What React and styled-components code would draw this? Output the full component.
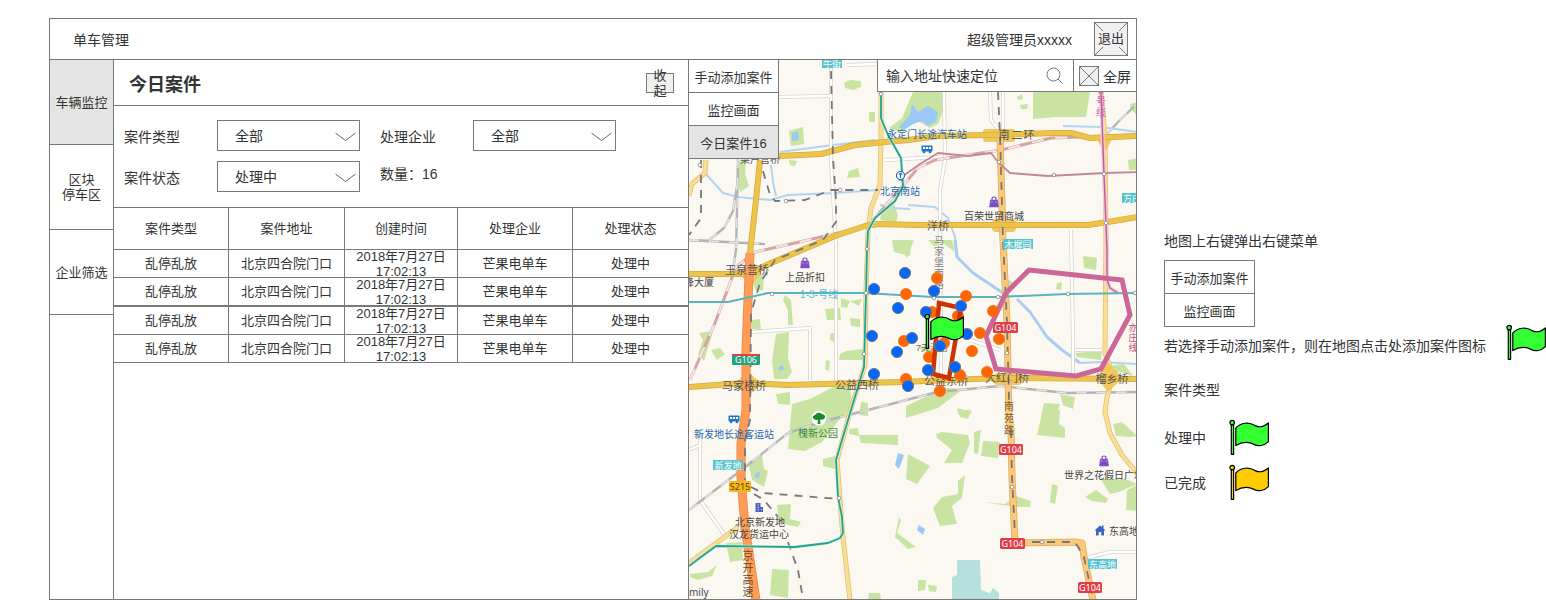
import React from "react";
import styled, { createGlobalStyle } from "styled-components";

const LINE = "#797979";

const GlobalStyle = createGlobalStyle`
  * { box-sizing: border-box; }
  body {
    margin: 0;
    background: #fff;
    color: #333;
    font-family: "Liberation Sans", "Noto Sans CJK SC", sans-serif;
    font-size: 14px;
  }
  button, input, select { font: inherit; color: inherit; margin: 0; }
`;

const Page = styled.div`
  display: flex;
  min-height: 100vh;
  padding: 18px 0 0 49px;
`;

const Frame = styled.div`
  flex: 1;
  min-width: 0;
  display: flex;
  flex-direction: column;
  border: 1px solid ${LINE};
`;

const Header = styled.header`
  display: flex;
  align-items: center;
  height: 41px;
  padding: 0 8px 0 23px;
  border-bottom: 1px solid ${LINE};
`;

const Brand = styled.div`
  flex: 1;
`;

const User = styled.div`
  margin-right: 22px;
`;

const LogoutButton = styled.button`
  position: relative;
  width: 34px;
  height: 34px;
  padding: 0;
  border: 1px solid ${LINE};
  background: #f0f0f0;
  font-size: 13px;
  svg {
    position: absolute;
    inset: 0;
    width: 100%;
    height: 100%;
  }
  span {
    position: relative;
    display: block;
    background: #f0f0f0;
    margin: 0 2px;
    line-height: 16px;
  }
`;

const Body = styled.div`
  flex: 1;
  display: flex;
`;

const Sidebar = styled.nav`
  width: 64px;
  border-right: 1px solid ${LINE};
`;

const SideItem = styled.button`
  display: block;
  width: 100%;
  height: 85px;
  padding: 0;
  border: 0;
  border-bottom: 1px solid ${LINE};
  background: ${(p) => (p.$active ? "#e4e4e4" : "#fff")};
  font-size: 13px;
  line-height: 15px;
  white-space: pre-line;
`;

const Panel = styled.section`
  width: 575px;
  border-right: 1px solid ${LINE};
`;

const PanelHead = styled.div`
  display: flex;
  align-items: center;
  justify-content: space-between;
  height: 46px;
  padding: 0 14px 0 15px;
  border-bottom: 1px solid ${LINE};
  h1 {
    margin: 0;
    font-size: 18px;
    font-weight: bold;
  }
`;

const FoldButton = styled.button`
  display: flex;
  align-items: center;
  width: 28px;
  height: 20px;
  padding: 0 6px;
  border: 1px solid ${LINE};
  background: #f0f0f0;
  font-size: 13px;
  line-height: 15px;
`;

const Filters = styled.div`
  display: grid;
  grid-template-columns: 93px 143px 113px 143px;
  grid-auto-rows: 31px;
  row-gap: 10px;
  align-items: center;
  padding: 14px 10px 15px;
  label:nth-of-type(even) {
    padding-left: 20px;
  }
`;

const SelectBox = styled.div`
  position: relative;
  height: 31px;
  svg {
    position: absolute;
    right: 4px;
    top: 12px;
    pointer-events: none;
  }
`;

const Select = styled.select`
  appearance: none;
  width: 100%;
  height: 100%;
  padding: 0 30px 0 17px;
  border: 1px solid ${LINE};
  border-radius: 0;
  background: #fff;
`;

const Count = styled.div`
  align-self: start;
  padding-left: 20px;
  line-height: 26px;
`;

const Table = styled.table`
  width: 100%;
  table-layout: fixed;
  border-collapse: separate;
  border-spacing: 0;
  border-top: 1px solid ${LINE};
  font-size: 13px;
  line-height: 15px;
`;

const Th = styled.th`
  height: 42px;
  padding: 0;
  font-weight: normal;
  border-bottom: 1px solid ${LINE};
  border-right: 1px solid ${LINE};
  &:last-child { border-right: 0; }
`;

const Td = styled.td`
  padding: 0;
  border-bottom: ${(p) => (p.$heavy ? 2 : 1)}px solid ${LINE};
  border-right: 1px solid ${LINE};
  &:last-child { border-right: 0; }
`;

const CellText = styled.div`
  display: flex;
  align-items: center;
  justify-content: center;
  height: 27px;
  text-align: center;
  white-space: pre-line;
`;

const MapArea = styled.section`
  position: relative;
  flex: 1;
  min-width: 0;
  overflow: hidden;
  background: #fbf8f2;
`;

const MapSvg = styled.svg`
  position: absolute;
  inset: 0;
  width: 100%;
  height: 100%;
`;

const MapTools = styled.div`
  position: absolute;
  top: 0;
  left: 0;
  width: 90px;
  border-right: 1px solid ${LINE};
`;

const MenuBox = styled.div`
  width: 91px;
  margin-top: 9px;
  border: 1px solid ${LINE};
  border-bottom: 0;
`;

const MenuItem = styled.button`
  display: block;
  width: 100%;
  height: 33px;
  padding: 0;
  border: 0;
  border-bottom: 1px solid ${LINE};
  background: ${(p) => (p.$active ? "#e4e4e4" : "#fff")};
  font-size: 13px;
  white-space: nowrap;
`;

const SearchBar = styled.div`
  position: absolute;
  top: 0;
  right: 0;
  display: flex;
  height: 32px;
  border-left: 1px solid ${LINE};
  border-bottom: 1px solid ${LINE};
  background: #fff;
`;

const SearchField = styled.label`
  display: flex;
  align-items: center;
  width: 195px;
  padding: 0 10px 0 8px;
  input {
    flex: 1;
    min-width: 0;
    padding: 0;
    border: 0;
    outline: 0;
    background: none;
  }
  input::placeholder { color: #333; opacity: 1; }
`;

const FullButton = styled.button`
  display: flex;
  align-items: center;
  justify-content: space-between;
  width: 63px;
  padding: 0 5px;
  border: 0;
  border-left: 1px solid ${LINE};
  background: #fff;
`;

const Notes = styled.aside`
  width: 409px;
  padding: 213px 0 0 27px;
  p, h2 {
    margin: 0;
    font-size: 14px;
    font-weight: normal;
    line-height: 20px;
  }
  h2 { margin-top: 12px; }
`;

const HintRow = styled.div`
  display: flex;
  align-items: flex-start;
  justify-content: space-between;
  margin-top: -3px;
  line-height: 44px;
`;

const Legend = styled.div`
  display: grid;
  grid-template-columns: 65px 40px;
  row-gap: 9px;
  margin-top: 19px;
  align-items: center;
`;

const FlagSvg = styled.svg`
  display: block;
  flex: none;
`;

function FlagShape({ color }) {
  return (
    <g fill={color} stroke="#000" strokeWidth="1.2" strokeLinejoin="round">
      <path d="M2.3 5.5H4.6V35.3H2.3Z" />
      <circle cx="3.2" cy="3.6" r="2.3" />
      <path d="M6.8 9C12 3.4 20 2.8 26 6.6C31 9.2 35.5 7.2 39.4 4V22.6C35 27 29 27.6 25 25.4C18 21.8 12 23.4 6.8 26.6Z" />
    </g>
  );
}

const Flag = ({ color }) => (
  <FlagSvg width="40" height="36" viewBox="0 0 40 36" aria-hidden="true">
    <FlagShape color={color} />
  </FlagSvg>
);

function Picker({ id, options }) {
  return (
    <SelectBox>
      <Select id={id}>
        {options.map((o) => <option key={o}>{o}</option>)}
      </Select>
      <svg width="21" height="10" viewBox="0 0 21 10" fill="none" stroke="#666" aria-hidden="true">
        <path d="M0.5 1L10.5 8.5L20.5 1" />
      </svg>
    </SelectBox>
  );
}

const parks = [
  "844,83 850,80 861,81 861,87 853,90 845,88",
  "789,131 803,127 804,144 791,146", "869,112 875,112 875,122 869,122",
  "849,171 858,168 860,177 847,178", "738,162 746,160 745,174 749,186 740,192 738,180",
  "1033,92 1090,92 1086,117 1056,117 1033,119",
  "889,128 902,118 913,92 944,92 946,104 938,124 930,128 912,118 900,132",
  "880,220 883,205 894,203 898,216 896,222", "1128,160 1137,158 1137,170 1129,170",
  "1130,104 1137,102 1137,116 1130,108", "789,160 797,161 795,166 790,165",
  "892,240 912,240 910,256 894,252", "900,248 908,241 914,240 907,258",
  "928,240 952,240 955,252 944,244 934,246",
  "755,273 764,276 763,290 756,291 753,284", "752,320 760,319 761,330 752,329",
  "785,295 791,300 793,325 788,325 788,310 783,300",
  "699,333 713,331 704,361 698,354 703,340", "711,350 720,348 725,354 717,360",
  "776,334 789,332 788,358 792,372 787,379 774,379 772,360",
  "825,309 840,308 841,320 827,320", "841,298 850,301 847,308 841,307", "850,301 862,299 859,306",
  "850,318 860,319 860,327 851,326", "830,334 836,332 834,342 830,340",
  "826,360 830,361 829,371 825,369", "846,351 863,349 864,360 839,360 840,354",
  "792,404 810,399 835,386 850,384 852,407 840,419 822,442 805,451 788,449",
  "776,394 790,392 790,405 778,404", "861,402 868,403 868,416 859,415",
  "859,435 861,443 898,445 898,435", "849,429 858,428 859,436 849,434",
  "823,459 835,456 835,469 823,466",
  "748,462 762,455 764,469 768,471 764,487 752,480",
  "777,505 791,504 790,519 801,522 798,527 779,523",
  "772,569 789,570 788,598 770,595", "726,543 742,542 743,560 730,562",
  "690,574 708,572 717,565 712,576 698,580 690,577",
  "899,517 901,520 897,533 916,547 908,549 895,537",
  "869,593 880,593 881,600 868,600",
  "936,434 942,432 968,435 970,443 962,463 944,463 952,450 937,438",
  "974,432 981,430 978,454 974,453", "983,441 1000,442 998,458 981,456",
  "908,454 930,466 917,484 906,479", "958,481 965,475 963,490 962,498 952,506 957,524 940,526 933,508 942,497 958,494",
  "984,502 1005,504 1016,496 1031,501 1030,507 1018,507 1002,505", "1043,410 1060,410 1059,424 1065,428 1065,438 1037,435",
  "959,410 971,410 968,419 960,417", "1113,424 1122,422 1137,436 1130,437 1116,436",
  "1052,484 1058,486 1055,504 1050,502", "1100,478 1128,480 1137,484 1119,492 1110,494",
  "1085,497 1096,490 1108,499 1106,503 1092,501", "1127,490 1137,485 1137,511 1126,510",
  "918,580 926,580 925,590 918,591", "928,585 937,586 936,592 929,591",
  "1083,256 1097,258 1096,270 1084,268", "1057,283 1062,282 1061,290 1056,289",
  "1075,353 1102,351 1101,360 1077,357", "1105,366 1124,364 1133,376 1120,372 1106,374",
  "944,388 963,389 938,408 906,418 906,406", "957,408 972,412 967,418 958,414",
  "1044,403 1060,404 1055,420 1041,417", "1060,394 1075,397 1073,409 1063,405",
  "1009,280 1016,284 1008,291 1004,285", "920,346 931,348 930,352 921,351",
  "1017,97 1022,94 1023,99 1018,100", "1020,105 1028,104 1027,109 1021,109",
];

const water = [
  "792,133 798,131 799,140 792,141", "899,127 910,115 912,104 918,112 928,106 938,112 936,122 928,126 922,121 913,124 904,130",
  "898,453 904,455 899,469 895,465", "919,525 925,529 923,535 917,530",
  "778,368 782,365 785,369 779,371", "755,474 760,471 759,478 755,478",
];

const streams = [
  "705,173 723,193 738,197 770,200 788,195 835,193 878,190",
  "771,165 773,182 776,196", "780,152 833,145 875,140",
  "908,205 935,207 948,218 955,237 957,257 973,273 1003,293",
  "1080,363 1100,362 1137,364", "880,205 893,208 910,209", "1063,126 1100,127 1137,132",
];

const lanes = [
  "831,60 831,160 836,245 836,380", "847,65 878,64", "779,97 831,96", "990,92 991,120 999,130",
  "944,92 945,160 940,190 941,380", "1071,230 1073,340 1073,375", "1075,350 1102,350",
  "751,332 810,328 810,380", "700,435 700,500 724,534", "689,450 700,445",
  "885,160 940,157", "1086,558 1110,552 1137,552", "970,340 1000,350",
  "1003,92 1003,130",
];

const railGrey = [
  "738,158 737,211 736,250 733,270",
  "689,240 708,241 724,228 733,211 738,180",
  "689,240 765,244",
  "689,510 748,465 788,433 821,422 868,410 918,397 937,392 1000,386 1067,393 1137,392",
  "1106,135 1120,120 1137,104",
];

const railPink = [
  "690,380 715,323 736,267 755,252 795,243 868,226 918,168 935,160 1001,150 1051,138 1137,135",
];

const dashes = [
  "831,71 833,158 836,200 836,222 823,240 775,260 760,283 751,313 750,420 745,440 745,480",
  "701,160 701,218 689,235", "763,171 770,195 775,201 805,200 831,190 878,190",
  "751,487 763,493 839,499", "754,494 764,500 778,517", "788,542 798,570 803,599",
  "998,92 1000,135 1003,240 1007,323 1009,400", "1011,430 1012,477 1015,535",
  "1032,542 1075,542 1084,557 1093,599",
];

const yellowRoads = [
  "779,156 821,154 855,145 885,142 908,140 938,136 988,135 1055,133 1071,133 1090,138 1137,136",
  "760,160 756,200 750,253",
  "689,274 748,274 771,263 835,236 865,226 878,224 918,225 1088,225 1108,222 1137,217",
  "689,387 745,383 788,385 901,382 1000,378 1137,379",
];

const paleRoads = [
  "881,91 881,138 880,185 871,208 868,232 866,293 865,365 851,408 837,460 840,500 843,537 850,600",
  "1101,92 1105,137 1106,240 1105,353 1113,376 1107,397 1105,412 1110,433 1122,455 1137,473",
  "689,563 738,527",
  "689,196 692,184 705,173 706,160",
];

const orangeDots = [
  [906, 294], [904, 341], [906, 379], [937, 278], [966, 296], [993, 311], [932, 312], [958, 316],
  [980, 333], [999, 339], [944, 343], [972, 351], [929, 357], [960, 375], [987, 372], [940, 391],
];
const blueDots = [
  [905, 273], [874, 289], [898, 308], [872, 336], [912, 338], [897, 352], [874, 374], [908, 386],
  [934, 291], [961, 306], [926, 312], [967, 334], [940, 346], [928, 370], [955, 367],
];
const stations = [
  [772, 294], [866, 293], [934, 298], [998, 297], [1068, 294], [1135, 293], [867, 249], [864, 354],
  [839, 498], [999, 162], [1054, 175], [1104, 174], [1106, 223], [1007, 353], [1042, 542],
  [1012, 487], [700, 165], [786, 201], [840, 190], [881, 94],
];

// [x, y, text, size, colour]
const labels = [
  [760, 163, "菜户营桥", 10, "#555"],
  [927, 138, "永定门长途汽车站", 10, "#2467ad"],
  [900, 195, "北京南站", 10, "#2467ad"],
  [994, 220, "百荣世贸商城", 10, "#444"],
  [938, 230, "洋桥", 11, "#555"],
  [747, 274, "玉泉营桥", 11, "#555"],
  [699, 286, "锋大厦", 10, "#444"],
  [805, 281, "上品折扣", 10, "#444"],
  [744, 390, "马家楼桥", 11, "#555"],
  [857, 389, "公益西桥", 11, "#555"],
  [946, 385, "公益东桥", 11, "#555"],
  [1007, 382, "大红门桥", 11, "#555"],
  [1112, 383, "榴乡桥", 11, "#555"],
  [932, 351, "7天酒店", 9, "#666"],
  [734, 438, "新发地长途客运站", 10, "#2467ad"],
  [818, 437, "槐新公园", 10, "#3c8a3f"],
  [760, 526, "北京新发地", 10, "#444"],
  [759, 538, "汉龙货运中心", 10, "#444"],
  [1104, 479, "世界之花假日广场", 10, "#444"],
  [1129, 535, "东高地区", 10, "#444"],
  [819, 298, "1-3-号线", 10, "#5cb8ce"],
  [1004, 139, "南", 11, "#555"],
  [1017, 139, "二", 11, "#555"],
  [1029, 139, "环", 11, "#555"],
];

// [x, first baseline, step, text, size, colour]
const columns = [
  [939, 244, 11, "马家堡西路", 10, "#888"],
  [1009, 410, 12, "南苑路", 10, "#775f38"],
  [1101, 94, 11, "5号线", 10, "#cc62b0"],
  [1133, 331, 10, "亦庄线", 9, "#c04878"],
  [748, 560, 12, "京开高速", 11, "#6b4a2a"],
];

// [x, y, width, text, background]
const tags = [
  [822, 58, 20, "牛街", "#56c4cf"],
  [1003, 239, 30, "木樨园", "#56c4cf"],
  [1122, 193, 20, "方庄", "#56c4cf"],
  [713, 460, 30, "新发地", "#56c4cf"],
  [1088, 559, 29, "东高地", "#56c4cf"],
];
const shields = [
  [993, 322, 25, "G104", "#dd3e48", "#fff"],
  [999, 444, 24, "G104", "#dd3e48", "#fff"],
  [1000, 538, 25, "G104", "#dd3e48", "#fff"],
  [1078, 582, 24, "G104", "#dd3e48", "#fff"],
  [732, 354, 28, "G106", "#23a47c", "#fff"],
  [729, 481, 22, "S215", "#f7b71b", "#5c4310"],
];

const Lines = ({ items, color, width, ...rest }) => (
  <g fill="none" stroke={color} strokeWidth={width} strokeLinejoin="round" {...rest}>
    {items.map((p) => <polyline key={p} points={p} />)}
  </g>
);

const Bag = ({ x, y }) => (
  <g transform={`translate(${x} ${y})`}>
    <path d="M-3.6 -2H3.6L4.5 5H-4.5Z" fill="#7a4fc4" stroke="#7a4fc4" strokeWidth="0.5" strokeLinejoin="round" />
    <path d="M-2 -2V-3Q-2 -5 0 -5Q2 -5 2 -3V-2" fill="none" stroke="#7a4fc4" strokeWidth="1.2" />
    <path d="M-2 -0.5V0.5M2 -0.5V0.5" stroke="#fff" strokeWidth="0.8" />
  </g>
);

const Bus = ({ x, y }) => (
  <g transform={`translate(${x} ${y})`} fill="#1f74c8">
    <rect x="-5.5" y="-3.5" width="11" height="6" rx="1" />
    <circle cx="-3" cy="3" r="1.3" />
    <circle cx="3" cy="3" r="1.3" />
    <path d="M-4 -2H-1.8V0H-4ZM-1 -2H1V0H-1ZM1.8 -2H4V0H1.8Z" fill="#fff" />
  </g>
);

function CityMap() {
  const g104 = ["1000,135 1003,240 1007,323 1009,420 1011,430 1012,477 1015,543 1075,542 1082,543 1084,557 1093,600"];
  const g106 = ["750,253 748,300 746,350 746,410 741,443 741,477 745,527 750,560 756,600"];
  const line4 = ["881,91 881,118 888,135 901,158 903,186 895,201 875,218 868,231 867,250 866,293 864,367 851,410 836,460 838,497 842,517 843,533 840,538 828,543 795,547 716,546 701,557 689,566"];
  const line13 = ["689,302 728,302 768,293 865,293 933,297 997,297 1067,294 1137,293"];
  const line14 = ["903,176 920,164 938,153 968,156 991,153 998,162 1010,173 1048,176 1105,173 1137,172"];
  const line5 = ["1101,92 1104,174 1107,250 1107,280 1110,288 1118,293"];
  return (
    <MapSvg viewBox="689 60 447 539" preserveAspectRatio="xMidYMid slice" role="img" aria-label="地图">
      <rect x="689" y="60" width="447" height="539" fill="#fbf8f2" />
      <g fill="#c9e4a2">{parks.map((p) => <polygon key={p} points={p} />)}</g>
      <g fill="#9cc8f5">{water.map((p) => <polygon key={p} points={p} />)}</g>
      <polygon points="957,560 980,560 981,590 990,593 993,588 999,593 999,600 952,600 952,577 957,575" fill="#b6e0dc" />
      <Lines items={streams} color="#b3d4ee" width="2" />
      <Lines items={["1017,299 1030,312 1047,337 1062,350 1080,363", "955,240 957,257 973,273 1003,293"]} color="#a9cdf3" width="3" />
      <Lines items={lanes} color="#d6d4d2" width="4" />
      <Lines items={lanes} color="#fff" width="2.4" />
      <Lines items={railGrey} color="#b4b4b8" width="2.4" />
      <Lines items={railGrey} color="#e6e6e6" width="1.4" strokeDasharray="10 10" />
      <Lines items={railPink} color="#d6a4a4" width="3" />
      <Lines items={railPink} color="#f5e6e4" width="2" strokeDasharray="12 12" />

      <Lines items={paleRoads} color="#ebbd62" width="5" />
      <Lines items={paleRoads} color="#f6dd98" width="3.6" />
      <g fill="#f4c65f">
        <polygon points="740,274 750,259 761,274 750,287" />
        <polygon points="735,384 747,371 762,384 747,397" />
        <rect x="983" y="129" width="32" height="13" rx="3" />
        <rect x="992" y="219" width="24" height="13" rx="4" />
        <rect x="994" y="373" width="28" height="12" rx="4" />
        <polygon points="1097,378 1107,362 1123,378 1108,392" />
        <polygon points="1096,137 1113,137 1107,149 1102,149" />
      </g>
      <Lines items={g104} color="#e7a65a" width="7" />
      <Lines items={g104} color="#fac97a" width="5.6" />
      <Lines items={yellowRoads} color="#d8a83c" width="6" />
      <Lines items={yellowRoads} color="#ecc44c" width="4.6" />
      <Lines items={g106} color="#e88a4c" width="9" />
      <Lines items={g106} color="#ff9c55" width="7.4" />
      <Lines items={dashes} color="#777" width="1.8" strokeDasharray="8 7" />

      <Lines items={line14} color="#c08796" width="1.8" />
      <Lines items={line5} color="#f3c9dc" width="4" />
      <Lines items={line5} color="#bb5f92" width="1.4" />
      <Lines items={line13} color="#5ab4be" width="2" />
      <Lines items={line4} color="#d9efe6" width="3" />
      <Lines items={line4} color="#22a48c" width="1.8" />
      <g fill="#fff" stroke="#8a8a8a" strokeWidth="0.8">
        {stations.map(([x, y]) => <circle key={`${x}-${y}`} cx={x} cy={y} r="1.8" />)}
      </g>

      {tags.map(([x, y, w, text, bg]) => (
        <g key={text}>
          <rect x={x} y={y} width={w} height="10" fill={bg} />
          <text x={x + w / 2} y={y + 9} fontSize="9" fill="#fff" textAnchor="middle">{text}</text>
        </g>
      ))}
      {shields.map(([x, y, w, text, bg, fg]) => (
        <g key={`${x}-${y}`}>
          <rect x={x} y={y} width={w} height="11" rx="1.5" fill={bg} />
          <text x={x + w / 2} y={y + 9} fontSize="9" fill={fg} textAnchor="middle" fontFamily="'Noto Sans', sans-serif">{text}</text>
        </g>
      ))}
      <rect x="732" y="354" width="28" height="2" fill="#dd3e48" />

      <g textAnchor="middle">
        {labels.map(([x, y, text, size, fill]) => (
          <text key={text} x={x} y={y} fontSize={size} fill={fill}>{text}</text>
        ))}
        {columns.map(([x, y, step, text, size, fill]) =>
          [...text].map((ch, i) => (
            <text key={text + i} x={x} y={y + i * step} fontSize={size} fill={fill}>{ch}</text>
          ))
        )}
      </g>
      <text x="689" y="596" fontSize="10" fill="#444" fontFamily="'Noto Sans', sans-serif">mily</text>

      <Bag x={994} y={202} />
      <Bag x={805} y={263} />
      <Bag x={1104} y={461} />
      <Bus x={927} y={149} />
      <Bus x={734} y={419} />
      <g fill="#fff" stroke="#2467ad" strokeWidth="1.2">
        <circle cx="900.5" cy="175.5" r="4" />
        <path d="M900.5 173V178M898.5 180H902.5M898.8 174.5Q900.5 172 902.2 174.5" />
      </g>
      <circle cx="819" cy="418" r="7.5" fill="#fff" />
      <path d="M814 419Q811 416 815 415Q818 411 822 414Q827 415 824 419Q822 420 820 419.5L820.5 424H817.5L818 419.5Q816 421 814 419Z" fill="#178a2a" />
      <path d="M756.5 503H760.5V507H763V512H755.5V503Z" fill="#4a63c0" />
      <path d="M757.5 505H759M757.5 507.5H759M757.5 510H759M761 509.5H762" stroke="#fff" strokeWidth="0.7" />
      <path d="M1094.5 530.5L1100 525.5L1102 527V525.5H1103.5V528.5L1105.5 530.5H1104V535.5H1101.3V532H1098.7V535.5H1096V530.5Z" fill="#3d63c4" />

      <polygon points="1029,270 1122,280 1130,315 1101,369 1076,376 996,369 986,336 1006,293" fill="none" stroke="#cc6699" strokeWidth="5" />
      <g fill="#ff6600" stroke="#e8762c" strokeWidth="0.8">
        {orangeDots.map(([x, y]) => <circle key={`${x}-${y}`} cx={x} cy={y} r="5.6" />)}
      </g>
      <polygon points="939,303 961,308 949,378 933,374" fill="none" stroke="#cc3300" strokeWidth="4.5" />
      <g fill="#0066ff" stroke="#797979">
        {blueDots.map(([x, y]) => <circle key={`${x}-${y}`} cx={x} cy={y} r="5.6" />)}
      </g>
      <g transform="translate(924 313)"><FlagShape color="#33ff33" /></g>
    </MapSvg>
  );
}

const headings = [["案件类型", 115], ["案件地址", 116], ["创建时间", 113], ["处理企业", 115], ["处理状态", 115]];
const record = ["乱停乱放", "北京四合院门口", "2018年7月27日\n17:02:13", "芒果电单车", "处理中"];
const rows = [record, record, record, record];

export default function App() {
  return (
    <Page>
      <GlobalStyle />
      <Frame>
        <Header>
          <Brand>单车管理</Brand>
          <User>超级管理员xxxxx</User>
          <LogoutButton type="button">
            <svg viewBox="0 0 32 32" stroke={LINE} aria-hidden="true">
              <path d="M0 0L32 32M32 0L0 32" />
            </svg>
            <span>退出</span>
          </LogoutButton>
        </Header>
        <Body>
          <Sidebar>
            <SideItem type="button" $active>车辆监控</SideItem>
            <SideItem type="button">{"区块\n停车区"}</SideItem>
            <SideItem type="button">企业筛选</SideItem>
          </Sidebar>
          <Panel>
            <PanelHead>
              <h1>今日案件</h1>
              <FoldButton type="button">收起</FoldButton>
            </PanelHead>
            <Filters>
              <label htmlFor="type">案件类型</label>
              <Picker id="type" options={["全部"]} />
              <label htmlFor="company">处理企业</label>
              <Picker id="company" options={["全部"]} />
              <label htmlFor="state">案件状态</label>
              <Picker id="state" options={["处理中", "已完成"]} />
              <Count>数量：16</Count>
            </Filters>
            <Table>
              <colgroup>
                {headings.map(([name, w]) => <col key={name} width={w} />)}
              </colgroup>
              <thead>
                <tr>{headings.map(([name]) => <Th key={name}>{name}</Th>)}</tr>
              </thead>
              <tbody>
                {rows.map((cells, i) => (
                  <tr key={i}>
                    {cells.map((c) => (
                      <Td key={c} $heavy={i === 1}><CellText>{c}</CellText></Td>
                    ))}
                  </tr>
                ))}
              </tbody>
            </Table>
          </Panel>
          <MapArea>
            <CityMap />
            <MapTools>
              <MenuItem type="button">手动添加案件</MenuItem>
              <MenuItem type="button">监控画面</MenuItem>
              <MenuItem type="button" $active>今日案件16</MenuItem>
            </MapTools>
            <SearchBar>
              <SearchField>
                <input type="text" aria-label="输入地址快速定位" placeholder="输入地址快速定位" />
                <svg width="17" height="17" viewBox="0 0 17 17" fill="none" stroke="#777" aria-hidden="true">
                  <circle cx="7.5" cy="7.5" r="6.5" />
                  <path d="M12 12L16.5 16.5" />
                </svg>
              </SearchField>
              <FullButton type="button">
                <svg width="20" height="20" viewBox="0 0 20 20" fill="#f0f0f0" stroke={LINE} aria-hidden="true">
                  <rect x="0.5" y="0.5" width="19" height="19" />
                  <path d="M0.5 0.5L19.5 19.5M19.5 0.5L0.5 19.5" />
                </svg>
                全屏
              </FullButton>
            </SearchBar>
          </MapArea>
        </Body>
      </Frame>
      <Notes>
        <p>地图上右键弹出右键菜单</p>
        <MenuBox>
          <MenuItem type="button">手动添加案件</MenuItem>
          <MenuItem type="button">监控画面</MenuItem>
        </MenuBox>
        <HintRow>
          <span>若选择手动添加案件，则在地图点击处添加案件图标</span>
          <Flag color="#33ff33" />
        </HintRow>
        <h2>案件类型</h2>
        <Legend>
          <span>处理中</span>
          <Flag color="#33ff33" />
          <span>已完成</span>
          <Flag color="#ffcc00" />
        </Legend>
      </Notes>
    </Page>
  );
}
